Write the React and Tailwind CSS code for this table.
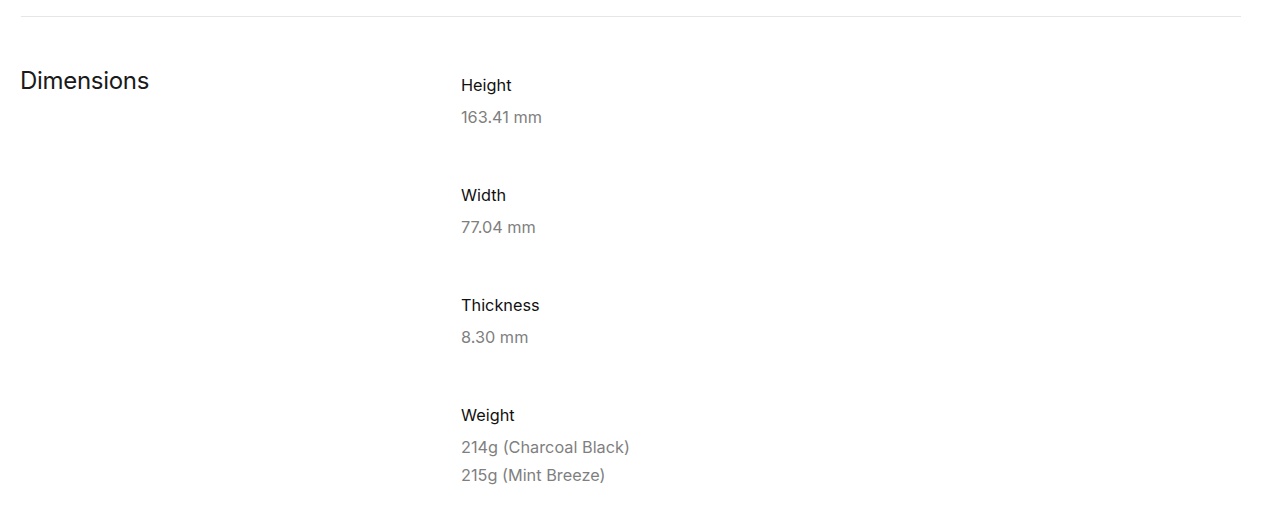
import React from 'react'

const specs = [
  { label: 'Height', values: ['163.41 mm'] },
  { label: 'Width', values: ['77.04 mm'] },
  { label: 'Thickness', values: ['8.30 mm'] },
  { label: 'Weight', values: ['214g (Charcoal Black)', '215g (Mint Breeze)'] },
]

function App() {
  return (
    <div className="bg-white min-h-[520px] pt-4 pl-[21px] font-['Inter',sans-serif]">
      <div className="w-[1220px] border-t border-[#e6e6e6]">
        {/* dimensions section */}
        <div className="flex pt-[48px]">
          <h2 className="w-[441px] shrink-0 -ml-px text-[24px] leading-8 text-[#1a1a1a] tracking-[-0.3px]">Dimensions</h2>
          <div className="flex flex-col gap-[50px] pt-[6px]">
            {specs.map((s) => (
              <div key={s.label}>
                <div className="text-[16.3px] leading-7 text-[#111]">{s.label}</div>
                <div className="mt-1">
                  {s.values.map((v) => (
                    <div key={v} className="text-[16.3px] leading-7 text-[#7f7f7f]">{v}</div>
                  ))}
                </div>
              </div>
            ))}
          </div>
        </div>
      </div>
    </div>
  )
}

export default App
